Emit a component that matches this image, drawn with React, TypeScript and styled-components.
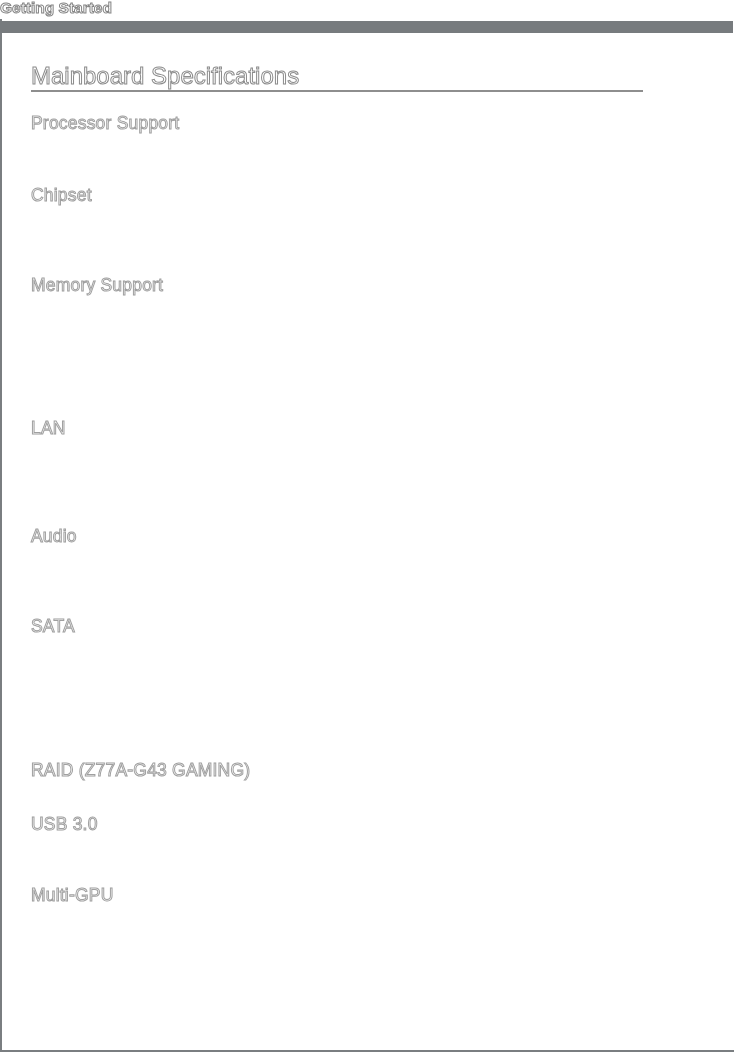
import React from "react";
import styled, { createGlobalStyle } from "styled-components";

const Global = createGlobalStyle`
  html, body { margin: 0; padding: 0; background: #ffffff; }
  body { font-family: "Liberation Sans", Arial, sans-serif; }
`;

const Page = styled.div`
  width: 734px;
  height: 1052px;
  display: flex;
  flex-direction: column;
  overflow: hidden;
`;

const OutlineText = styled.div`
  color: #ffffff;
  will-change: transform;
  white-space: nowrap;
`;

const RunningHead = styled(OutlineText)`
  font-size: 15.5px;
  line-height: 15px;
  font-weight: 700;
  -webkit-text-stroke: 1px #858585;
  height: 19px;
`;

const Frame = styled.div`
  flex: 1;
  border-left: 2px solid #7a7e81;
  border-bottom: 2px solid #7a7e81;
  display: flex;
  flex-direction: column;
`;

const TopBar = styled.div`
  height: 12px;
  margin-top: 2px;
  margin-left: -2px;
  margin-right: 1px;
  background: #777b7e;
`;

const Content = styled.div`
  padding: 29px 0 0 29px;
  display: flex;
  flex-direction: column;
`;

const Heading = styled.h1`
  margin: 0;
  width: 612px;
  font-size: 24px;
  line-height: 28px;
  font-weight: 400;
  color: #ffffff;
  will-change: transform;
  -webkit-text-stroke: 1px #8c8c8c;
  border-bottom: 2px solid #8e8e8e;
`;

const SpecList = styled.div`
  margin-top: 22px;
  display: flex;
  flex-direction: column;
`;

const SpecRow = styled.div<{ $h: number }>`
  height: ${(p) => p.$h}px;
  display: flex;
  align-items: flex-start;
`;

const Label = styled(OutlineText)`
  font-size: 17.5px;
  line-height: 18px;
  letter-spacing: 0.2px;
  font-weight: 400;
  -webkit-text-stroke: 1px #a0a0a0;
`;

const specs: [string, number][] = [
  ["Processor Support", 72],
  ["Chipset", 90],
  ["Memory Support", 143],
  ["LAN", 108],
  ["Audio", 90],
  ["SATA", 144],
  ["RAID (Z77A-G43 GAMING)", 54],
  ["USB 3.0", 71],
  ["Multi-GPU", 60],
];

export default function App() {
  return (
    <Page>
      <Global />
      <RunningHead>Getting Started</RunningHead>
      <Frame>
        <TopBar />
        <Content>
          <Heading>Mainboard Specifications</Heading>
          <SpecList>
            {specs.map(([label, h]) => (
              <SpecRow key={label} $h={h}>
                <Label>{label}</Label>
              </SpecRow>
            ))}
          </SpecList>
        </Content>
      </Frame>
    </Page>
  );
}
